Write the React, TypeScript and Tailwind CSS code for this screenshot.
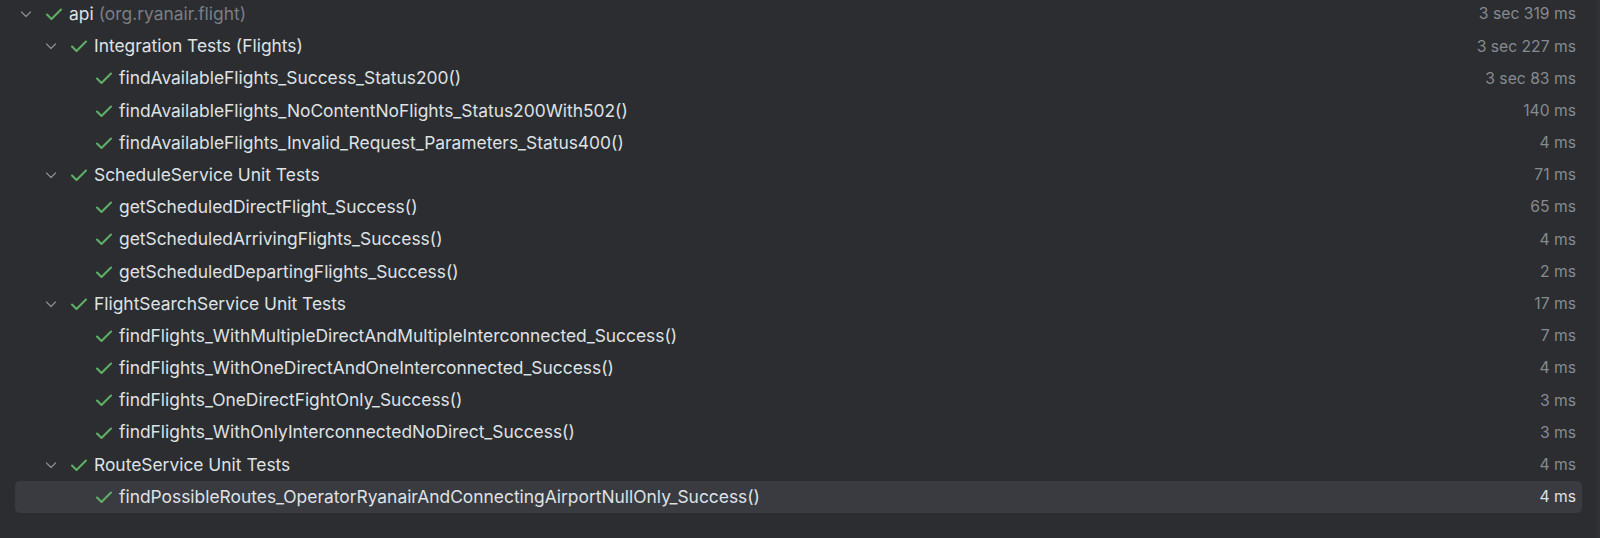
import React from "react";

type Row = {
  depth: number;
  name: string;
  pkg?: string;
  time: string;
  folder?: boolean;
  selected?: boolean;
};

const rows: Row[] = [
  { depth: 0, name: "api", pkg: "(org.ryanair.flight)", time: "3 sec 319 ms", folder: true },
  { depth: 1, name: "Integration Tests (Flights)", time: "3 sec 227 ms", folder: true },
  { depth: 2, name: "findAvailableFlights_Success_Status200()", time: "3 sec 83 ms" },
  { depth: 2, name: "findAvailableFlights_NoContentNoFlights_Status200With502()", time: "140 ms" },
  { depth: 2, name: "findAvailableFlights_Invalid_Request_Parameters_Status400()", time: "4 ms" },
  { depth: 1, name: "ScheduleService Unit Tests", time: "71 ms", folder: true },
  { depth: 2, name: "getScheduledDirectFlight_Success()", time: "65 ms" },
  { depth: 2, name: "getScheduledArrivingFlights_Success()", time: "4 ms" },
  { depth: 2, name: "getScheduledDepartingFlights_Success()", time: "2 ms" },
  { depth: 1, name: "FlightSearchService Unit Tests", time: "17 ms", folder: true },
  { depth: 2, name: "findFlights_WithMultipleDirectAndMultipleInterconnected_Success()", time: "7 ms" },
  { depth: 2, name: "findFlights_WithOneDirectAndOneInterconnected_Success()", time: "4 ms" },
  { depth: 2, name: "findFlights_OneDirectFightOnly_Success()", time: "3 ms" },
  { depth: 2, name: "findFlights_WithOnlyInterconnectedNoDirect_Success()", time: "3 ms" },
  { depth: 1, name: "RouteService Unit Tests", time: "4 ms", folder: true },
  { depth: 2, name: "findPossibleRoutes_OperatorRyanairAndConnectingAirportNullOnly_Success()", time: "4 ms", selected: true },
];

const indent = ["pl-[5px]", "pl-[30px]", "pl-[55px]"];

function Chevron() {
  return (
    <svg width="12" height="12" viewBox="0 0 12 12" className="shrink-0">
      <path d="M1.5 4 L6 8.5 L10.5 4" fill="none" stroke="#8b8e94" strokeWidth="1.2" strokeLinecap="round" strokeLinejoin="round" />
    </svg>
  );
}

function Check() {
  return (
    <svg width="18" height="16" viewBox="0 0 18 16" className="shrink-0">
      <path d="M2 8.5 L6.5 13 L16 3.5" fill="none" stroke="#5fb066" strokeWidth="2.1" strokeLinecap="round" strokeLinejoin="round" />
    </svg>
  );
}

export default function App() {
  return (
    <div className="flex h-[538px] w-full overflow-hidden bg-[#2b2d30] font-['Inter',sans-serif]">
      <div className="-mt-[2px] flex-1">
        {rows.map((r, i) => (
          <div
            key={i}
            className={`mx-[15px] flex h-[32.2px] items-center rounded-[5px] pr-[6px] ${indent[r.depth]} ${r.selected ? "bg-[#393b40]" : ""}`}
          >
            {r.folder ? <Chevron /> : <span className="w-[12px] shrink-0" />}
            <span className="ml-[13px] flex">
              <Check />
            </span>
            <span className="ml-[6px] whitespace-nowrap text-[17.4px] text-[#dfe1e5]">
              {r.name}
              {r.pkg && <span className="ml-[5px] text-[#7a7e85]">{r.pkg}</span>}
            </span>
            <span className={`ml-auto whitespace-nowrap text-[15.7px] ${r.selected ? "text-[#dfe1e5]" : "text-[#868a91]"}`}>
              {r.time}
            </span>
          </div>
        ))}
      </div>
      <div className="w-[3px] bg-[#303236]" />
    </div>
  );
}
